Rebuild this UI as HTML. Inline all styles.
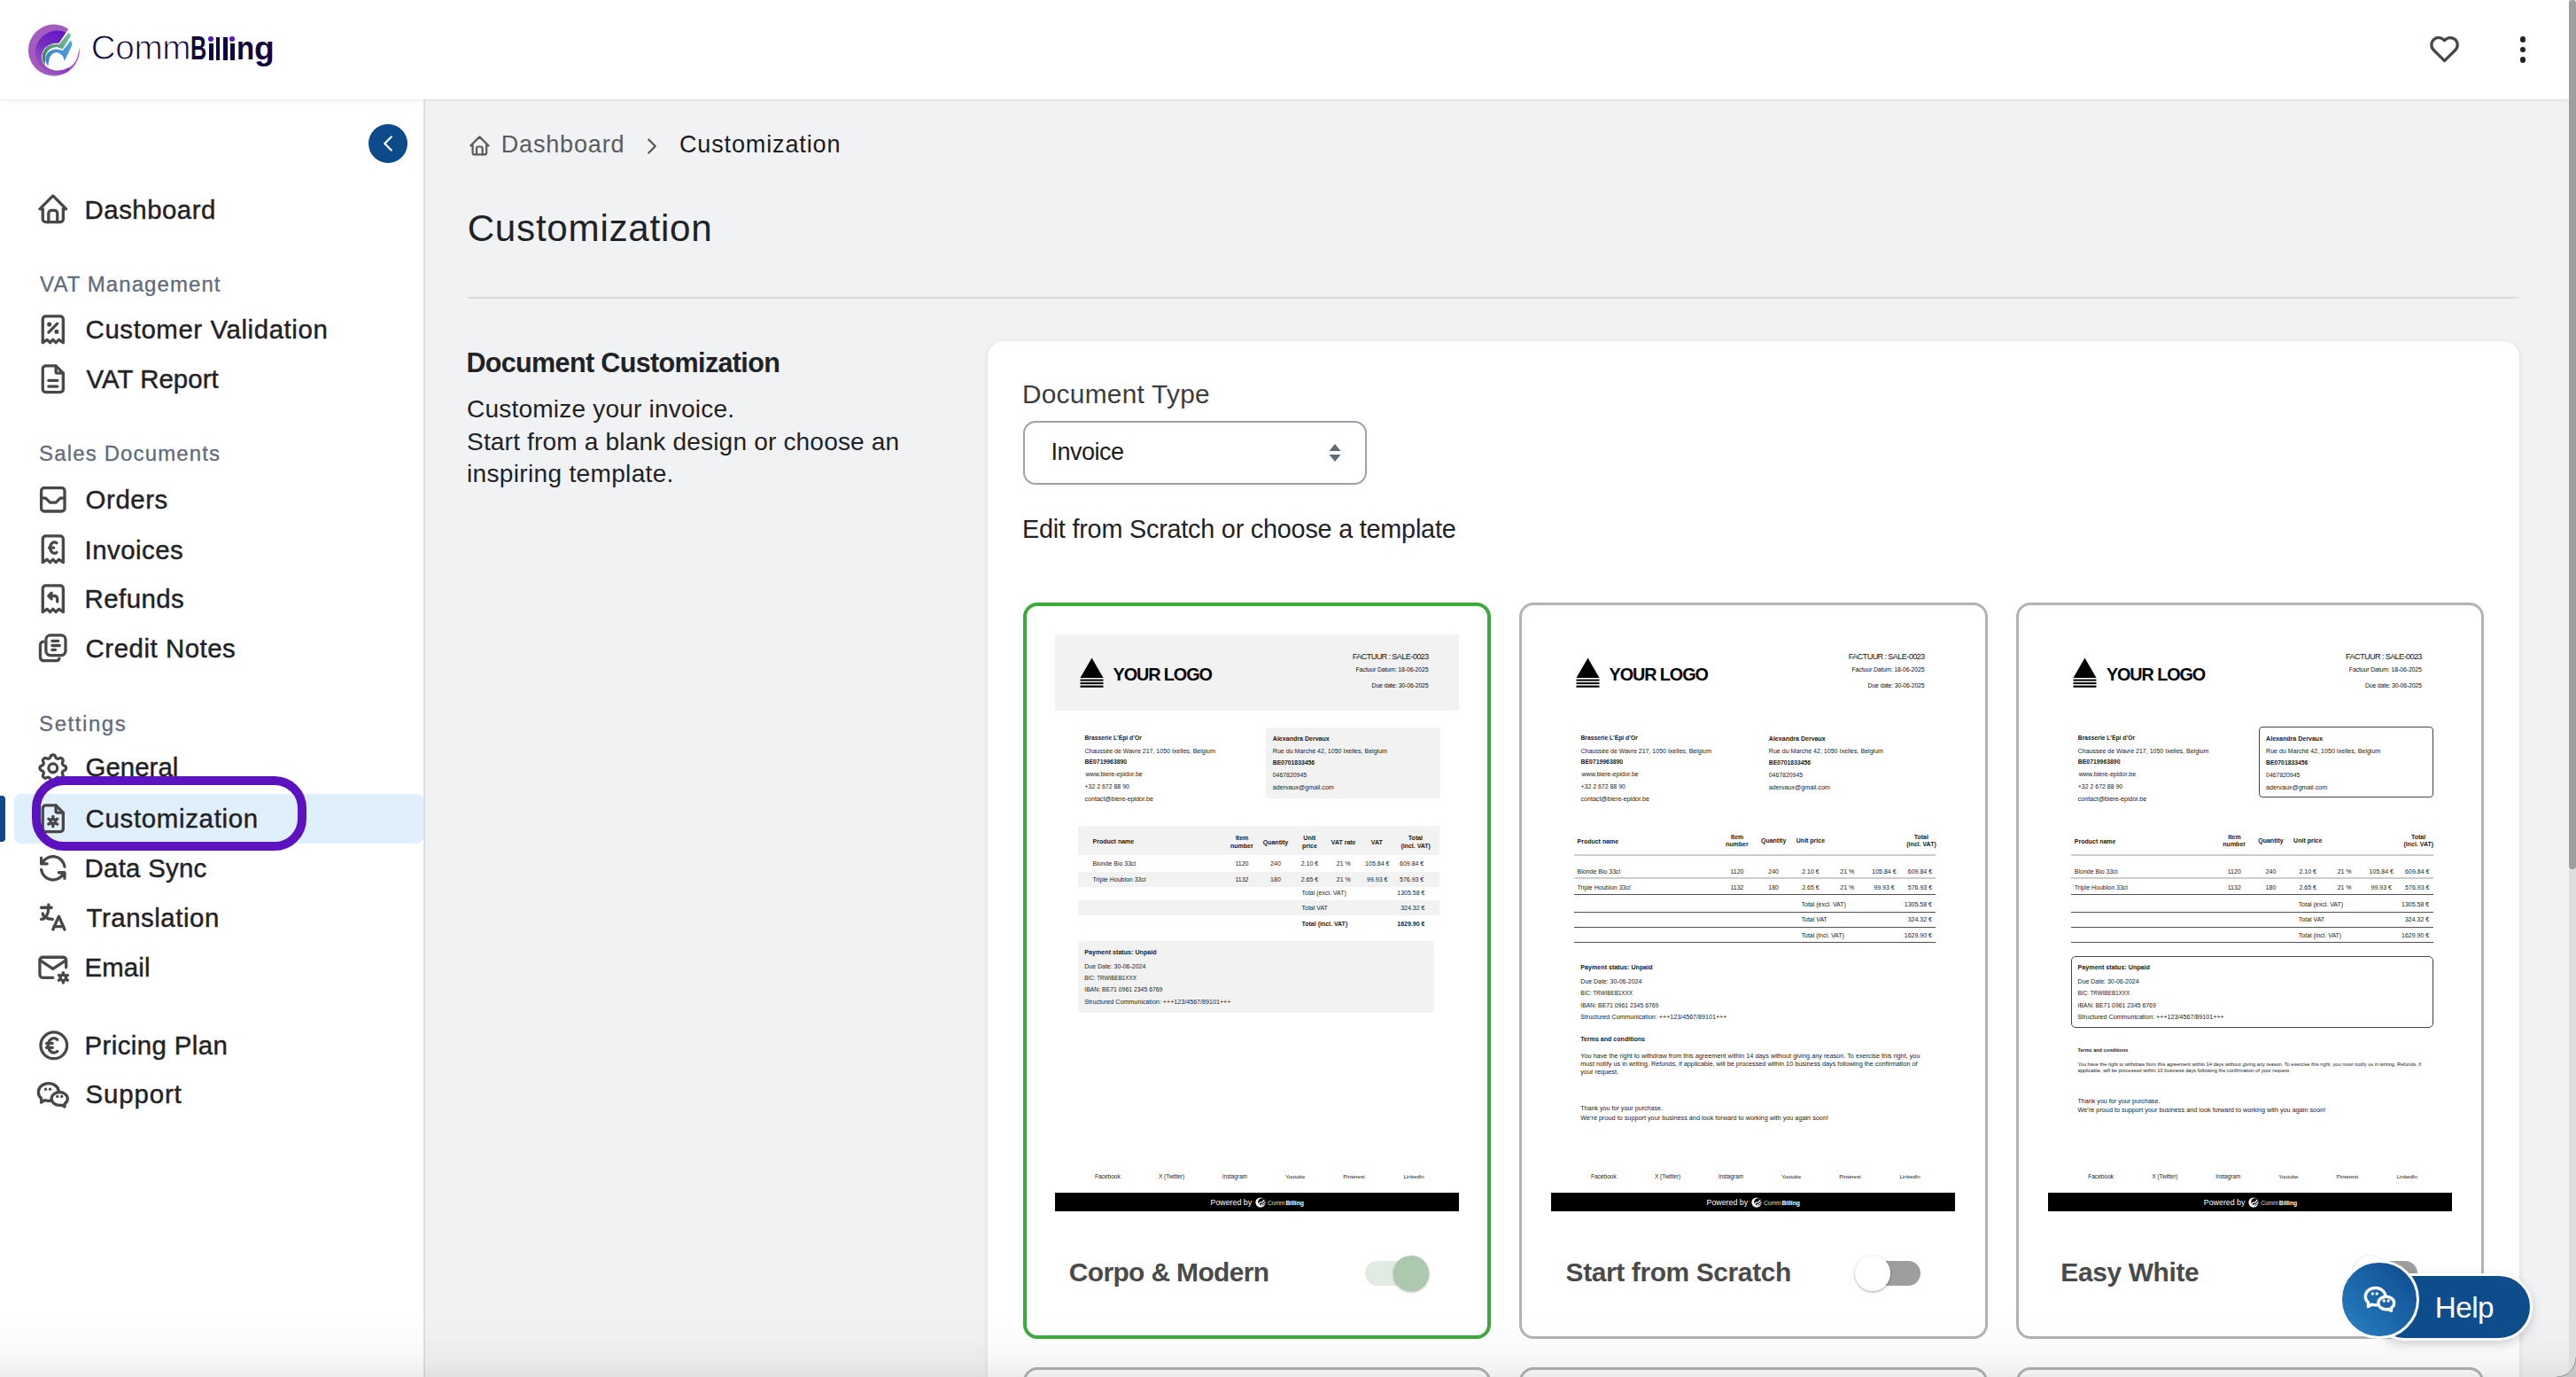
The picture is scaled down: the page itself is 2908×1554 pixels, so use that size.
<!DOCTYPE html>
<html><head><meta charset="utf-8"><title>CommBilling - Customization</title>
<style>
html,body{margin:0;padding:0;width:2908px;height:1554px;overflow:hidden;background:#f1f2f4;font-family:"Liberation Sans",sans-serif;}
.a{position:absolute}
.t{position:absolute;white-space:nowrap}
</style></head><body>
<svg class=a style="left:527.52px;top:150.82px;" width="26.76" height="26.76" viewBox="0 0 24 24" fill="none" stroke="#5c5c5c" stroke-width="2" stroke-linecap="round" stroke-linejoin="round"><path d="M5 12l-2 0l9 -9l9 9l-2 0"/><path d="M5 12v7a2 2 0 0 0 2 2h10a2 2 0 0 0 2 -2v-7"/><path d="M9 21v-6a2 2 0 0 1 2 -2h2a2 2 0 0 1 2 2v6"/></svg>
<div class=t style="left:565.70px;top:150.31px;font-size:27.03px;line-height:27.03px;color:#5c5c5c;letter-spacing:0.833px;">Dashboard</div>
<svg class=a style="left:720.90px;top:149.50px;" width="30.00" height="30.00" viewBox="0 0 24 24" fill="none" stroke="#555" stroke-width="1.75" stroke-linecap="round" stroke-linejoin="round"><path d="M9 6l6 6l-6 6"/></svg>
<div class=t style="left:767.00px;top:150.31px;font-size:27.03px;line-height:27.03px;color:#1c1c1c;letter-spacing:0.855px;">Customization</div>
<div class=t style="left:527.70px;top:237.01px;font-size:42.15px;line-height:42.15px;color:#1f2226;letter-spacing:0.753px;">Customization</div>
<div class=a style="left:528.00px;top:335.00px;width:2316.00px;height:1.60px;background:#dcdde1"></div>
<div class=t style="left:526.40px;top:393.56px;font-size:30.52px;line-height:30.52px;color:#1f2226;font-weight:700;letter-spacing:-0.640px;">Document Customization</div>
<div class=t style="left:527.00px;top:448.25px;font-size:28.05px;line-height:28.05px;color:#1f2226;letter-spacing:0.199px;">Customize your invoice.</div>
<div class=t style="left:527.00px;top:485.25px;font-size:28.05px;line-height:28.05px;color:#1f2226;letter-spacing:0.175px;">Start from a blank design or choose an</div>
<div class=t style="left:527.00px;top:521.45px;font-size:28.05px;line-height:28.05px;color:#1f2226;letter-spacing:0.321px;">inspiring template.</div>
<div class=a style="left:1115.00px;top:385.00px;width:1729.00px;height:1300.00px;background:#fff;border-radius:18px;box-shadow:0 1px 7px rgba(0,0,0,0.085)"></div>
<div class=t style="left:1153.90px;top:430.47px;font-size:29.80px;line-height:29.80px;color:#3d3d3d;letter-spacing:0.299px;">Document Type</div>
<div class=a style="left:1155.40px;top:475.30px;width:387.20px;height:71.30px;box-sizing:border-box;border:2px solid #9aa3ad;border-radius:14px;background:#fff"></div>
<div class=t style="left:1186.50px;top:497.31px;font-size:27.03px;line-height:27.03px;color:#1c1c1c;letter-spacing:-0.512px;">Invoice</div>
<svg class=a style="left:1500px;top:500px" width="14" height="22" viewBox="0 0 14 22"><path d="M7 0.9L13.5 9H0.5z" fill="#5f6b77"/><path d="M7 21.1L13.5 13H0.5z" fill="#5f6b77"/></svg>
<div class=t style="left:1153.90px;top:583.23px;font-size:28.78px;line-height:28.78px;color:#1f2226;letter-spacing:-0.201px;">Edit from Scratch or choose a template</div>
<div class=a style="left:1154.80px;top:680.00px;width:528.00px;height:830.60px;box-sizing:border-box;border:4px solid #3cab3c;border-radius:16px;background:#fff"></div>
<div class=a style="left:1154.80px;top:1543.00px;width:528.00px;height:300.00px;box-sizing:border-box;border:3.6px solid #b3b3b3;border-radius:16px;background:#fff"></div>
<div class=a style="left:1191.00px;top:716.00px;width:456.00px;height:85.60px;background:#f2f2f2"></div>
<svg class=a style="left:1218.50px;top:742px" width="27" height="34" viewBox="0 0 27 34"><path d="M13.5 0.4L26.5 23H0.5z" fill="#000"/><rect x="0.5" y="24.6" width="26" height="2" fill="#000"/><rect x="0.5" y="28.1" width="26" height="2" fill="#000"/><rect x="0.5" y="31.6" width="26" height="2.2" fill="#000"/></svg>
<div class=t style="left:1256.60px;top:752.26px;font-size:19.77px;line-height:19.77px;color:#000;font-weight:700;letter-spacing:-1.067px;">YOUR LOGO</div>
<div class=t style="left:1526.80px;top:737.26px;font-size:9.14px;line-height:9.14px;color:#111;letter-spacing:-0.612px;">FACTUUR : SALE-0023</div>
<div class=t style="left:1530.50px;top:753.14px;font-size:6.92px;line-height:6.92px;color:#111;letter-spacing:-0.114px;">Factuur Datum: 18-06-2025</div>
<div class=t style="left:1548.60px;top:770.64px;font-size:6.92px;line-height:6.92px;color:#111;letter-spacing:-0.169px;">Due date: 30-06-2025</div>
<div class=t style="left:1224.50px;top:829.89px;font-size:6.74px;line-height:6.74px;color:#1a1a1a;font-weight:700;">Brasserie L’Épi d’Or</div>
<div class=t style="left:1224.50px;top:843.51px;font-size:7.02px;line-height:7.02px;color:#1a1a1a;">Chaussée de Wavre 217, 1050 Ixelles, Belgium</div>
<div class=t style="left:1224.50px;top:857.48px;font-size:6.87px;line-height:6.87px;color:#1a1a1a;font-weight:700;">BE0719963890</div>
<div class=t style="left:1225.42px;top:871.13px;font-size:7.12px;line-height:7.12px;color:#1a1a1a;">www.biere-epidor.be</div>
<div class=t style="left:1224.50px;top:885.13px;font-size:6.94px;line-height:6.94px;color:#1a1a1a;">+32 2 672 88 90</div>
<div class=t style="left:1224.50px;top:898.84px;font-size:7.10px;line-height:7.10px;color:#1a1a1a;">contact@biere-epidor.be</div>
<div class=a style="left:1429.20px;top:820.60px;width:196.80px;height:80.20px;background:#f2f2f2;border-radius:4px"></div>
<div class=t style="left:1436.80px;top:830.41px;font-size:7.07px;line-height:7.07px;color:#1a1a1a;font-weight:700;">Alexandra Dervaux</div>
<div class=t style="left:1436.80px;top:844.32px;font-size:7.07px;line-height:7.07px;color:#1a1a1a;">Rue du Marché 42, 1050 Ixelles, Belgium</div>
<div class=t style="left:1436.80px;top:858.43px;font-size:6.81px;line-height:6.81px;color:#1a1a1a;font-weight:700;">BE0701833456</div>
<div class=t style="left:1436.80px;top:872.27px;font-size:6.89px;line-height:6.89px;color:#1a1a1a;">0467820945</div>
<div class=t style="left:1436.80px;top:885.97px;font-size:7.13px;line-height:7.13px;color:#1a1a1a;">adervaux@gmail.com</div>
<div class=a style="left:1217.00px;top:932.00px;width:408.00px;height:32.60px;background:#f2f2f2"></div>
<div class=t style="left:1233.50px;top:945.79px;font-size:7.00px;line-height:7.00px;color:#1a1a1a;font-weight:700;">Product name</div>
<div class=t style="left:1425.75px;top:946.59px;font-size:7.00px;line-height:7.00px;color:#1a1a1a;font-weight:700;">Quantity</div>
<div class=t style="left:1502.77px;top:946.59px;font-size:7.00px;line-height:7.00px;color:#1a1a1a;font-weight:700;">VAT rate</div>
<div class=t style="left:1547.76px;top:946.59px;font-size:7.00px;line-height:7.00px;color:#1a1a1a;font-weight:700;">VAT</div>
<div class=t style="left:1394.92px;top:941.99px;font-size:7.00px;line-height:7.00px;color:#1a1a1a;font-weight:700;">Item</div>
<div class=t style="left:1389.03px;top:951.39px;font-size:7.00px;line-height:7.00px;color:#1a1a1a;font-weight:700;">number</div>
<div class=t style="left:1471.36px;top:941.99px;font-size:7.00px;line-height:7.00px;color:#1a1a1a;font-weight:700;">Unit</div>
<div class=t style="left:1470.08px;top:951.39px;font-size:7.00px;line-height:7.00px;color:#1a1a1a;font-weight:700;">price</div>
<div class=t style="left:1589.87px;top:941.99px;font-size:7.00px;line-height:7.00px;color:#1a1a1a;font-weight:700;">Total</div>
<div class=t style="left:1581.38px;top:951.39px;font-size:7.00px;line-height:7.00px;color:#1a1a1a;font-weight:700;">(incl. VAT)</div>
<div class=a style="left:1217.00px;top:983.50px;width:408.00px;height:17.00px;background:#f2f2f2"></div>
<div class=a style="left:1217.00px;top:1015.60px;width:408.00px;height:17.00px;background:#f2f2f2"></div>
<div class=t style="left:1233.50px;top:970.89px;font-size:7.00px;line-height:7.00px;color:#1a1a1a;">Blonde Bio 33cl</div>
<div class=t style="left:1394.42px;top:970.89px;font-size:7.00px;line-height:7.00px;color:#1a1a1a;">1120</div>
<div class=t style="left:1434.11px;top:970.89px;font-size:7.00px;line-height:7.00px;color:#1a1a1a;">240</div>
<div class=t style="left:1468.72px;top:970.89px;font-size:7.00px;line-height:7.00px;color:#1a1a1a;">2.10 €</div>
<div class=t style="left:1508.83px;top:970.89px;font-size:7.00px;line-height:7.00px;color:#1a1a1a;">21 %</div>
<div class=t style="left:1541.12px;top:970.89px;font-size:7.00px;line-height:7.00px;color:#1a1a1a;">105.84 €</div>
<div class=t style="left:1580.02px;top:970.89px;font-size:7.00px;line-height:7.00px;color:#1a1a1a;">609.84 €</div>
<div class=t style="left:1233.50px;top:988.79px;font-size:7.00px;line-height:7.00px;color:#1a1a1a;">Triple Houblon 33cl</div>
<div class=t style="left:1394.42px;top:988.79px;font-size:7.00px;line-height:7.00px;color:#1a1a1a;">1132</div>
<div class=t style="left:1434.11px;top:988.79px;font-size:7.00px;line-height:7.00px;color:#1a1a1a;">180</div>
<div class=t style="left:1468.72px;top:988.79px;font-size:7.00px;line-height:7.00px;color:#1a1a1a;">2.65 €</div>
<div class=t style="left:1508.83px;top:988.79px;font-size:7.00px;line-height:7.00px;color:#1a1a1a;">21 %</div>
<div class=t style="left:1543.07px;top:988.79px;font-size:7.00px;line-height:7.00px;color:#1a1a1a;">99.93 €</div>
<div class=t style="left:1580.02px;top:988.79px;font-size:7.00px;line-height:7.00px;color:#1a1a1a;">576.93 €</div>
<div class=t style="left:1469.50px;top:1004.19px;font-size:7.00px;line-height:7.00px;color:#1a1a1a;">Total (excl. VAT)</div>
<div class=t style="left:1577.25px;top:1004.19px;font-size:7.00px;line-height:7.00px;color:#1a1a1a;">1305.58 €</div>
<div class=t style="left:1469.50px;top:1021.39px;font-size:7.00px;line-height:7.00px;color:#1a1a1a;">Total VAT</div>
<div class=t style="left:1581.15px;top:1021.39px;font-size:7.00px;line-height:7.00px;color:#1a1a1a;">324.32 €</div>
<div class=t style="left:1469.50px;top:1038.79px;font-size:7.00px;line-height:7.00px;color:#1a1a1a;font-weight:700;">Total (incl. VAT)</div>
<div class=t style="left:1577.25px;top:1038.79px;font-size:7.00px;line-height:7.00px;color:#1a1a1a;font-weight:700;">1629.90 €</div>
<div class=a style="left:1217.00px;top:1061.70px;width:401.70px;height:81.10px;background:#f2f2f2;border-radius:5px"></div>
<div class=t style="left:1224.30px;top:1071.57px;font-size:7.15px;line-height:7.15px;color:#1a1a1a;font-weight:700;">Payment status: Unpaid</div>
<div class=t style="left:1224.30px;top:1086.52px;font-size:6.98px;line-height:6.98px;color:#1a1a1a;">Due Date: 30-06-2024</div>
<div class=t style="left:1224.30px;top:1100.97px;font-size:6.32px;line-height:6.32px;color:#1a1a1a;">BIC: TRWIBEB1XXX</div>
<div class=t style="left:1224.30px;top:1114.22px;font-size:6.86px;line-height:6.86px;color:#1a1a1a;">IBAN: BE71 0961 2345 6769</div>
<div class=t style="left:1224.30px;top:1127.68px;font-size:7.15px;line-height:7.15px;color:#1a1a1a;">Structured Communication: +++123/4567/89101+++</div>
<div class=t style="left:1235.90px;top:1324.79px;font-size:6.58px;line-height:6.58px;color:#222;">Facebook</div>
<div class=t style="left:1308.10px;top:1324.97px;font-size:6.37px;line-height:6.37px;color:#222;">X (Twitter)</div>
<div class=t style="left:1379.90px;top:1325.03px;font-size:6.30px;line-height:6.30px;color:#222;">Instagram</div>
<div class=t style="left:1450.90px;top:1325.16px;font-size:6.14px;line-height:6.14px;color:#222;">Youtube</div>
<div class=t style="left:1516.20px;top:1325.07px;font-size:6.25px;line-height:6.25px;color:#222;">Pinterest</div>
<div class=t style="left:1584.40px;top:1325.13px;font-size:6.18px;line-height:6.18px;color:#222;">LinkedIn</div>
<div class=a style="left:1191.00px;top:1345.70px;width:456.00px;height:21.30px;background:#000"></div>
<div class=t style="left:1366.50px;top:1353.43px;font-size:8.84px;line-height:8.84px;color:#fff;">Powered by</div>
<svg class=a style="left:1417.00px;top:1350.5px" width="12" height="12" viewBox="0 0 12 12"><circle cx="6" cy="6" r="5.6" fill="#fff"/><circle cx="7.4" cy="5.4" r="4.2" fill="#000"/><path d="M4.3 9.6 C3.6 7 5.2 5.4 7.8 5.9 L10.3 3.2" stroke="#fff" stroke-width="1.3" fill="none"/><path d="M6.2 10.3 C6 8.6 7.4 7.6 9 8.2 L11 5.6" stroke="#fff" stroke-width="1.1" fill="none"/></svg>
<div class=t style="left:1431.00px;top:1354.52px;font-size:6.80px;line-height:6.80px;color:#ddd;letter-spacing:-0.102px;">Comm</div>
<div class=t style="left:1451.50px;top:1354.52px;font-size:6.80px;line-height:6.80px;color:#fff;font-weight:700;letter-spacing:-0.062px;">Billing</div>
<div class=a style="left:1714.80px;top:680.00px;width:529.00px;height:830.60px;box-sizing:border-box;border:3.6px solid #b3b3b3;border-radius:16px;background:#fff"></div>
<div class=a style="left:1714.80px;top:1543.00px;width:529.00px;height:300.00px;box-sizing:border-box;border:3.6px solid #b3b3b3;border-radius:16px;background:#fff"></div>
<svg class=a style="left:1778.50px;top:742px" width="27" height="34" viewBox="0 0 27 34"><path d="M13.5 0.4L26.5 23H0.5z" fill="#000"/><rect x="0.5" y="24.6" width="26" height="2" fill="#000"/><rect x="0.5" y="28.1" width="26" height="2" fill="#000"/><rect x="0.5" y="31.6" width="26" height="2.2" fill="#000"/></svg>
<div class=t style="left:1816.60px;top:752.26px;font-size:19.77px;line-height:19.77px;color:#000;font-weight:700;letter-spacing:-1.067px;">YOUR LOGO</div>
<div class=t style="left:2086.80px;top:737.26px;font-size:9.14px;line-height:9.14px;color:#111;letter-spacing:-0.612px;">FACTUUR : SALE-0023</div>
<div class=t style="left:2090.50px;top:753.14px;font-size:6.92px;line-height:6.92px;color:#111;letter-spacing:-0.114px;">Factuur Datum: 18-06-2025</div>
<div class=t style="left:2108.60px;top:770.64px;font-size:6.92px;line-height:6.92px;color:#111;letter-spacing:-0.169px;">Due date: 30-06-2025</div>
<div class=t style="left:1784.50px;top:829.89px;font-size:6.74px;line-height:6.74px;color:#1a1a1a;font-weight:700;">Brasserie L’Épi d’Or</div>
<div class=t style="left:1784.50px;top:843.51px;font-size:7.02px;line-height:7.02px;color:#1a1a1a;">Chaussée de Wavre 217, 1050 Ixelles, Belgium</div>
<div class=t style="left:1784.50px;top:857.48px;font-size:6.87px;line-height:6.87px;color:#1a1a1a;font-weight:700;">BE0719963890</div>
<div class=t style="left:1785.42px;top:871.13px;font-size:7.12px;line-height:7.12px;color:#1a1a1a;">www.biere-epidor.be</div>
<div class=t style="left:1784.50px;top:885.13px;font-size:6.94px;line-height:6.94px;color:#1a1a1a;">+32 2 672 88 90</div>
<div class=t style="left:1784.50px;top:898.84px;font-size:7.10px;line-height:7.10px;color:#1a1a1a;">contact@biere-epidor.be</div>
<div class=t style="left:1996.80px;top:830.41px;font-size:7.07px;line-height:7.07px;color:#1a1a1a;font-weight:700;">Alexandra Dervaux</div>
<div class=t style="left:1996.80px;top:844.32px;font-size:7.07px;line-height:7.07px;color:#1a1a1a;">Rue du Marché 42, 1050 Ixelles, Belgium</div>
<div class=t style="left:1996.80px;top:858.43px;font-size:6.81px;line-height:6.81px;color:#1a1a1a;font-weight:700;">BE0701833456</div>
<div class=t style="left:1996.80px;top:872.27px;font-size:6.89px;line-height:6.89px;color:#1a1a1a;">0467820945</div>
<div class=t style="left:1996.80px;top:885.97px;font-size:7.13px;line-height:7.13px;color:#1a1a1a;">adervaux@gmail.com</div>
<div class=t style="left:1780.50px;top:945.89px;font-size:7.00px;line-height:7.00px;color:#1a1a1a;font-weight:700;">Product name</div>
<div class=t style="left:1987.95px;top:944.59px;font-size:7.00px;line-height:7.00px;color:#1a1a1a;font-weight:700;">Quantity</div>
<div class=t style="left:2027.81px;top:944.59px;font-size:7.00px;line-height:7.00px;color:#1a1a1a;font-weight:700;">Unit price</div>
<div class=t style="left:1953.92px;top:940.89px;font-size:7.00px;line-height:7.00px;color:#1a1a1a;font-weight:700;">Item</div>
<div class=t style="left:1948.03px;top:949.29px;font-size:7.00px;line-height:7.00px;color:#1a1a1a;font-weight:700;">number</div>
<div class=t style="left:2160.67px;top:940.89px;font-size:7.00px;line-height:7.00px;color:#1a1a1a;font-weight:700;">Total</div>
<div class=t style="left:2152.18px;top:949.29px;font-size:7.00px;line-height:7.00px;color:#1a1a1a;font-weight:700;">(incl. VAT)</div>
<div class=a style="left:1776.70px;top:964.00px;width:408.60px;height:2.00px;background:#cdcdcd"></div>
<div class=a style="left:1776.70px;top:990.20px;width:408.60px;height:2.00px;background:#cdcdcd"></div>
<div class=a style="left:1776.70px;top:1009.20px;width:408.60px;height:1.10px;background:#505050"></div>
<div class=a style="left:1776.70px;top:1028.80px;width:408.60px;height:1.10px;background:#505050"></div>
<div class=a style="left:1776.70px;top:1045.90px;width:408.60px;height:1.10px;background:#505050"></div>
<div class=a style="left:1776.70px;top:1063.00px;width:408.60px;height:1.10px;background:#505050"></div>
<div class=t style="left:1780.50px;top:980.19px;font-size:7.00px;line-height:7.00px;color:#1a1a1a;">Blonde Bio 33cl</div>
<div class=t style="left:1953.42px;top:980.19px;font-size:7.00px;line-height:7.00px;color:#1a1a1a;">1120</div>
<div class=t style="left:1996.31px;top:980.19px;font-size:7.00px;line-height:7.00px;color:#1a1a1a;">240</div>
<div class=t style="left:2034.22px;top:980.19px;font-size:7.00px;line-height:7.00px;color:#1a1a1a;">2.10 €</div>
<div class=t style="left:2077.33px;top:980.19px;font-size:7.00px;line-height:7.00px;color:#1a1a1a;">21 %</div>
<div class=t style="left:2113.32px;top:980.19px;font-size:7.00px;line-height:7.00px;color:#1a1a1a;">105.84 €</div>
<div class=t style="left:2153.82px;top:980.19px;font-size:7.00px;line-height:7.00px;color:#1a1a1a;">609.84 €</div>
<div class=t style="left:1780.50px;top:997.79px;font-size:7.00px;line-height:7.00px;color:#1a1a1a;">Triple Houblon 33cl</div>
<div class=t style="left:1953.42px;top:997.79px;font-size:7.00px;line-height:7.00px;color:#1a1a1a;">1132</div>
<div class=t style="left:1996.31px;top:997.79px;font-size:7.00px;line-height:7.00px;color:#1a1a1a;">180</div>
<div class=t style="left:2034.22px;top:997.79px;font-size:7.00px;line-height:7.00px;color:#1a1a1a;">2.65 €</div>
<div class=t style="left:2077.33px;top:997.79px;font-size:7.00px;line-height:7.00px;color:#1a1a1a;">21 %</div>
<div class=t style="left:2115.27px;top:997.79px;font-size:7.00px;line-height:7.00px;color:#1a1a1a;">99.93 €</div>
<div class=t style="left:2153.82px;top:997.79px;font-size:7.00px;line-height:7.00px;color:#1a1a1a;">576.93 €</div>
<div class=t style="left:2033.50px;top:1017.19px;font-size:7.00px;line-height:7.00px;color:#1a1a1a;">Total (excl. VAT)</div>
<div class=t style="left:2149.75px;top:1017.19px;font-size:7.00px;line-height:7.00px;color:#1a1a1a;">1305.58 €</div>
<div class=t style="left:2033.50px;top:1034.39px;font-size:7.00px;line-height:7.00px;color:#1a1a1a;">Total VAT</div>
<div class=t style="left:2153.65px;top:1034.39px;font-size:7.00px;line-height:7.00px;color:#1a1a1a;">324.32 €</div>
<div class=t style="left:2033.50px;top:1051.89px;font-size:7.00px;line-height:7.00px;color:#1a1a1a;">Total (incl. VAT)</div>
<div class=t style="left:2149.75px;top:1051.89px;font-size:7.00px;line-height:7.00px;color:#1a1a1a;">1629.90 €</div>
<div class=t style="left:1784.30px;top:1088.97px;font-size:7.15px;line-height:7.15px;color:#1a1a1a;font-weight:700;">Payment status: Unpaid</div>
<div class=t style="left:1784.30px;top:1104.12px;font-size:6.98px;line-height:6.98px;color:#1a1a1a;">Due Date: 30-06-2024</div>
<div class=t style="left:1784.30px;top:1118.47px;font-size:6.32px;line-height:6.32px;color:#1a1a1a;">BIC: TRWIBEB1XXX</div>
<div class=t style="left:1784.30px;top:1131.72px;font-size:6.86px;line-height:6.86px;color:#1a1a1a;">IBAN: BE71 0961 2345 6769</div>
<div class=t style="left:1784.30px;top:1145.08px;font-size:7.15px;line-height:7.15px;color:#1a1a1a;">Structured Communication: +++123/4567/89101+++</div>
<div class=t style="left:1784.20px;top:1169.34px;font-size:7.07px;line-height:7.07px;color:#1a1a1a;font-weight:700;">Terms and conditions</div>
<div class=t style="left:1784.20px;top:1187.74px;font-size:7.30px;line-height:7.30px;color:#1a1a1a;">You have the right to withdraw from this agreement within 14 days without giving any reason. To exercise this right, you</div>
<div class=t style="left:1784.20px;top:1197.05px;font-size:7.29px;line-height:7.29px;color:#1a1a1a;">must notify us in writing. Refunds, if applicable, will be processed within 10 business days following the confirmation of</div>
<div class=t style="left:1784.20px;top:1206.29px;font-size:7.36px;line-height:7.36px;color:#1a1a1a;">your request.</div>
<div class=t style="left:1784.20px;top:1248.47px;font-size:7.15px;line-height:7.15px;color:#1a1a1a;">Thank you for your purchase.</div>
<div class=t style="left:1784.20px;top:1257.86px;font-size:7.27px;line-height:7.27px;color:#1a1a1a;">We’re proud to support your business and look forward to working with you again soon!</div>
<div class=t style="left:1795.90px;top:1324.79px;font-size:6.58px;line-height:6.58px;color:#222;">Facebook</div>
<div class=t style="left:1868.10px;top:1324.97px;font-size:6.37px;line-height:6.37px;color:#222;">X (Twitter)</div>
<div class=t style="left:1939.90px;top:1325.03px;font-size:6.30px;line-height:6.30px;color:#222;">Instagram</div>
<div class=t style="left:2010.90px;top:1325.16px;font-size:6.14px;line-height:6.14px;color:#222;">Youtube</div>
<div class=t style="left:2076.20px;top:1325.07px;font-size:6.25px;line-height:6.25px;color:#222;">Pinterest</div>
<div class=t style="left:2144.40px;top:1325.13px;font-size:6.18px;line-height:6.18px;color:#222;">LinkedIn</div>
<div class=a style="left:1751.00px;top:1345.70px;width:456.00px;height:21.30px;background:#000"></div>
<div class=t style="left:1926.50px;top:1353.43px;font-size:8.84px;line-height:8.84px;color:#fff;">Powered by</div>
<svg class=a style="left:1977.00px;top:1350.5px" width="12" height="12" viewBox="0 0 12 12"><circle cx="6" cy="6" r="5.6" fill="#fff"/><circle cx="7.4" cy="5.4" r="4.2" fill="#000"/><path d="M4.3 9.6 C3.6 7 5.2 5.4 7.8 5.9 L10.3 3.2" stroke="#fff" stroke-width="1.3" fill="none"/><path d="M6.2 10.3 C6 8.6 7.4 7.6 9 8.2 L11 5.6" stroke="#fff" stroke-width="1.1" fill="none"/></svg>
<div class=t style="left:1991.00px;top:1354.52px;font-size:6.80px;line-height:6.80px;color:#ddd;letter-spacing:-0.102px;">Comm</div>
<div class=t style="left:2011.50px;top:1354.52px;font-size:6.80px;line-height:6.80px;color:#fff;font-weight:700;letter-spacing:-0.062px;">Billing</div>
<div class=a style="left:2276.10px;top:680.00px;width:528.00px;height:830.60px;box-sizing:border-box;border:3.6px solid #b3b3b3;border-radius:16px;background:#fff"></div>
<div class=a style="left:2276.10px;top:1543.00px;width:528.00px;height:300.00px;box-sizing:border-box;border:3.6px solid #b3b3b3;border-radius:16px;background:#fff"></div>
<svg class=a style="left:2339.80px;top:742px" width="27" height="34" viewBox="0 0 27 34"><path d="M13.5 0.4L26.5 23H0.5z" fill="#000"/><rect x="0.5" y="24.6" width="26" height="2" fill="#000"/><rect x="0.5" y="28.1" width="26" height="2" fill="#000"/><rect x="0.5" y="31.6" width="26" height="2.2" fill="#000"/></svg>
<div class=t style="left:2377.90px;top:752.26px;font-size:19.77px;line-height:19.77px;color:#000;font-weight:700;letter-spacing:-1.067px;">YOUR LOGO</div>
<div class=t style="left:2648.10px;top:737.26px;font-size:9.14px;line-height:9.14px;color:#111;letter-spacing:-0.612px;">FACTUUR : SALE-0023</div>
<div class=t style="left:2651.80px;top:753.14px;font-size:6.92px;line-height:6.92px;color:#111;letter-spacing:-0.114px;">Factuur Datum: 18-06-2025</div>
<div class=t style="left:2669.90px;top:770.64px;font-size:6.92px;line-height:6.92px;color:#111;letter-spacing:-0.169px;">Due date: 30-06-2025</div>
<div class=t style="left:2345.80px;top:829.89px;font-size:6.74px;line-height:6.74px;color:#1a1a1a;font-weight:700;">Brasserie L’Épi d’Or</div>
<div class=t style="left:2345.80px;top:843.51px;font-size:7.02px;line-height:7.02px;color:#1a1a1a;">Chaussée de Wavre 217, 1050 Ixelles, Belgium</div>
<div class=t style="left:2345.80px;top:857.48px;font-size:6.87px;line-height:6.87px;color:#1a1a1a;font-weight:700;">BE0719963890</div>
<div class=t style="left:2346.72px;top:871.13px;font-size:7.12px;line-height:7.12px;color:#1a1a1a;">www.biere-epidor.be</div>
<div class=t style="left:2345.80px;top:885.13px;font-size:6.94px;line-height:6.94px;color:#1a1a1a;">+32 2 672 88 90</div>
<div class=t style="left:2345.80px;top:898.84px;font-size:7.10px;line-height:7.10px;color:#1a1a1a;">contact@biere-epidor.be</div>
<div class=a style="left:2549.80px;top:820.30px;width:197.30px;height:80.10px;box-sizing:border-box;border:1px solid #444;border-radius:4px"></div>
<div class=t style="left:2558.10px;top:830.41px;font-size:7.07px;line-height:7.07px;color:#1a1a1a;font-weight:700;">Alexandra Dervaux</div>
<div class=t style="left:2558.10px;top:844.32px;font-size:7.07px;line-height:7.07px;color:#1a1a1a;">Rue du Marché 42, 1050 Ixelles, Belgium</div>
<div class=t style="left:2558.10px;top:858.43px;font-size:6.81px;line-height:6.81px;color:#1a1a1a;font-weight:700;">BE0701833456</div>
<div class=t style="left:2558.10px;top:872.27px;font-size:6.89px;line-height:6.89px;color:#1a1a1a;">0467820945</div>
<div class=t style="left:2558.10px;top:885.97px;font-size:7.13px;line-height:7.13px;color:#1a1a1a;">adervaux@gmail.com</div>
<div class=t style="left:2341.80px;top:945.89px;font-size:7.00px;line-height:7.00px;color:#1a1a1a;font-weight:700;">Product name</div>
<div class=t style="left:2549.25px;top:944.59px;font-size:7.00px;line-height:7.00px;color:#1a1a1a;font-weight:700;">Quantity</div>
<div class=t style="left:2589.11px;top:944.59px;font-size:7.00px;line-height:7.00px;color:#1a1a1a;font-weight:700;">Unit price</div>
<div class=t style="left:2515.22px;top:940.89px;font-size:7.00px;line-height:7.00px;color:#1a1a1a;font-weight:700;">Item</div>
<div class=t style="left:2509.33px;top:949.29px;font-size:7.00px;line-height:7.00px;color:#1a1a1a;font-weight:700;">number</div>
<div class=t style="left:2721.97px;top:940.89px;font-size:7.00px;line-height:7.00px;color:#1a1a1a;font-weight:700;">Total</div>
<div class=t style="left:2713.48px;top:949.29px;font-size:7.00px;line-height:7.00px;color:#1a1a1a;font-weight:700;">(incl. VAT)</div>
<div class=a style="left:2338.00px;top:964.00px;width:408.60px;height:2.00px;background:#cdcdcd"></div>
<div class=a style="left:2338.00px;top:990.20px;width:408.60px;height:2.00px;background:#cdcdcd"></div>
<div class=a style="left:2338.00px;top:1009.20px;width:408.60px;height:1.10px;background:#505050"></div>
<div class=a style="left:2338.00px;top:1028.80px;width:408.60px;height:1.10px;background:#505050"></div>
<div class=a style="left:2338.00px;top:1045.90px;width:408.60px;height:1.10px;background:#505050"></div>
<div class=a style="left:2338.00px;top:1063.00px;width:408.60px;height:1.10px;background:#505050"></div>
<div class=t style="left:2341.80px;top:980.19px;font-size:7.00px;line-height:7.00px;color:#1a1a1a;">Blonde Bio 33cl</div>
<div class=t style="left:2514.72px;top:980.19px;font-size:7.00px;line-height:7.00px;color:#1a1a1a;">1120</div>
<div class=t style="left:2557.61px;top:980.19px;font-size:7.00px;line-height:7.00px;color:#1a1a1a;">240</div>
<div class=t style="left:2595.52px;top:980.19px;font-size:7.00px;line-height:7.00px;color:#1a1a1a;">2.10 €</div>
<div class=t style="left:2638.63px;top:980.19px;font-size:7.00px;line-height:7.00px;color:#1a1a1a;">21 %</div>
<div class=t style="left:2674.62px;top:980.19px;font-size:7.00px;line-height:7.00px;color:#1a1a1a;">105.84 €</div>
<div class=t style="left:2715.12px;top:980.19px;font-size:7.00px;line-height:7.00px;color:#1a1a1a;">609.84 €</div>
<div class=t style="left:2341.80px;top:997.79px;font-size:7.00px;line-height:7.00px;color:#1a1a1a;">Triple Houblon 33cl</div>
<div class=t style="left:2514.72px;top:997.79px;font-size:7.00px;line-height:7.00px;color:#1a1a1a;">1132</div>
<div class=t style="left:2557.61px;top:997.79px;font-size:7.00px;line-height:7.00px;color:#1a1a1a;">180</div>
<div class=t style="left:2595.52px;top:997.79px;font-size:7.00px;line-height:7.00px;color:#1a1a1a;">2.65 €</div>
<div class=t style="left:2638.63px;top:997.79px;font-size:7.00px;line-height:7.00px;color:#1a1a1a;">21 %</div>
<div class=t style="left:2676.57px;top:997.79px;font-size:7.00px;line-height:7.00px;color:#1a1a1a;">99.93 €</div>
<div class=t style="left:2715.12px;top:997.79px;font-size:7.00px;line-height:7.00px;color:#1a1a1a;">576.93 €</div>
<div class=t style="left:2594.80px;top:1017.19px;font-size:7.00px;line-height:7.00px;color:#1a1a1a;">Total (excl. VAT)</div>
<div class=t style="left:2711.05px;top:1017.19px;font-size:7.00px;line-height:7.00px;color:#1a1a1a;">1305.58 €</div>
<div class=t style="left:2594.80px;top:1034.39px;font-size:7.00px;line-height:7.00px;color:#1a1a1a;">Total VAT</div>
<div class=t style="left:2714.95px;top:1034.39px;font-size:7.00px;line-height:7.00px;color:#1a1a1a;">324.32 €</div>
<div class=t style="left:2594.80px;top:1051.89px;font-size:7.00px;line-height:7.00px;color:#1a1a1a;">Total (incl. VAT)</div>
<div class=t style="left:2711.05px;top:1051.89px;font-size:7.00px;line-height:7.00px;color:#1a1a1a;">1629.90 €</div>
<div class=a style="left:2338.30px;top:1079.20px;width:408.50px;height:81.00px;box-sizing:border-box;border:1px solid #444;border-radius:5px"></div>
<div class=t style="left:2345.60px;top:1088.97px;font-size:7.15px;line-height:7.15px;color:#1a1a1a;font-weight:700;">Payment status: Unpaid</div>
<div class=t style="left:2345.60px;top:1104.12px;font-size:6.98px;line-height:6.98px;color:#1a1a1a;">Due Date: 30-06-2024</div>
<div class=t style="left:2345.60px;top:1118.47px;font-size:6.32px;line-height:6.32px;color:#1a1a1a;">BIC: TRWIBEB1XXX</div>
<div class=t style="left:2345.60px;top:1131.72px;font-size:6.86px;line-height:6.86px;color:#1a1a1a;">IBAN: BE71 0961 2345 6769</div>
<div class=t style="left:2345.60px;top:1145.08px;font-size:7.15px;line-height:7.15px;color:#1a1a1a;">Structured Communication: +++123/4567/89101+++</div>
<div class=t style="left:2345.50px;top:1183.49px;font-size:5.53px;line-height:5.53px;color:#1a1a1a;font-weight:700;">Terms and conditions</div>
<div class=t style="left:2345.50px;top:1198.60px;font-size:5.67px;line-height:5.67px;color:#1a1a1a;">You have the right to withdraw from this agreement within 14 days without giving any reason. To exercise this right, you must notify us in writing. Refunds, if</div>
<div class=t style="left:2345.50px;top:1205.79px;font-size:5.68px;line-height:5.68px;color:#1a1a1a;">applicable, will be processed within 10 business days following the confirmation of your request.</div>
<div class=t style="left:2345.50px;top:1239.87px;font-size:7.15px;line-height:7.15px;color:#1a1a1a;">Thank you for your purchase.</div>
<div class=t style="left:2345.50px;top:1248.96px;font-size:7.27px;line-height:7.27px;color:#1a1a1a;">We’re proud to support your business and look forward to working with you again soon!</div>
<div class=t style="left:2357.20px;top:1324.79px;font-size:6.58px;line-height:6.58px;color:#222;">Facebook</div>
<div class=t style="left:2429.40px;top:1324.97px;font-size:6.37px;line-height:6.37px;color:#222;">X (Twitter)</div>
<div class=t style="left:2501.20px;top:1325.03px;font-size:6.30px;line-height:6.30px;color:#222;">Instagram</div>
<div class=t style="left:2572.20px;top:1325.16px;font-size:6.14px;line-height:6.14px;color:#222;">Youtube</div>
<div class=t style="left:2637.50px;top:1325.07px;font-size:6.25px;line-height:6.25px;color:#222;">Pinterest</div>
<div class=t style="left:2705.70px;top:1325.13px;font-size:6.18px;line-height:6.18px;color:#222;">LinkedIn</div>
<div class=a style="left:2312.30px;top:1345.70px;width:456.00px;height:21.30px;background:#000"></div>
<div class=t style="left:2487.80px;top:1353.43px;font-size:8.84px;line-height:8.84px;color:#fff;">Powered by</div>
<svg class=a style="left:2538.30px;top:1350.5px" width="12" height="12" viewBox="0 0 12 12"><circle cx="6" cy="6" r="5.6" fill="#fff"/><circle cx="7.4" cy="5.4" r="4.2" fill="#000"/><path d="M4.3 9.6 C3.6 7 5.2 5.4 7.8 5.9 L10.3 3.2" stroke="#fff" stroke-width="1.3" fill="none"/><path d="M6.2 10.3 C6 8.6 7.4 7.6 9 8.2 L11 5.6" stroke="#fff" stroke-width="1.1" fill="none"/></svg>
<div class=t style="left:2552.30px;top:1354.52px;font-size:6.80px;line-height:6.80px;color:#ddd;letter-spacing:-0.102px;">Comm</div>
<div class=t style="left:2572.80px;top:1354.52px;font-size:6.80px;line-height:6.80px;color:#fff;font-weight:700;letter-spacing:-0.062px;">Billing</div>
<div class=t style="left:1206.80px;top:1420.95px;font-size:29.94px;line-height:29.94px;color:#4a4a4a;font-weight:700;letter-spacing:-0.638px;">Corpo &amp; Modern</div>
<div class=t style="left:1767.60px;top:1421.25px;font-size:29.94px;line-height:29.94px;color:#4a4a4a;font-weight:700;letter-spacing:-0.383px;">Start from Scratch</div>
<div class=t style="left:2326.30px;top:1420.75px;font-size:29.94px;line-height:29.94px;color:#4a4a4a;font-weight:700;letter-spacing:-0.374px;">Easy White</div>
<div class=a style="left:1541.00px;top:1423.00px;width:66.00px;height:28.00px;background:#e2ebe2;border-radius:14px"></div>
<div class=a style="left:1572.80px;top:1417.00px;width:40.00px;height:40.00px;background:#adc9ad;border-radius:50%;box-shadow:0 1px 3px rgba(0,0,0,0.35)"></div>
<div class=a style="left:2106.50px;top:1423.30px;width:61.20px;height:27.40px;background:#9e9e9e;border-radius:14px"></div>
<div class=a style="left:2094.20px;top:1417.00px;width:39.60px;height:39.60px;background:#fff;border-radius:50%;box-shadow:0 1px 3px rgba(0,0,0,0.35)"></div>
<div class=a style="left:2667.80px;top:1423.30px;width:61.20px;height:27.40px;background:#9e9e9e;border-radius:14px"></div>
<div class=a style="left:2655.50px;top:1417.00px;width:39.60px;height:39.60px;background:#fff;border-radius:50%;box-shadow:0 1px 3px rgba(0,0,0,0.35)"></div>
<div class=a style="left:2676.00px;top:1436.60px;width:183.20px;height:76.80px;box-sizing:border-box;border:3.5px solid #fff;background:#0e4d8c;border-radius:39px;box-shadow:0 4px 12px rgba(0,0,0,0.18)"></div>
<div class=a style="left:2641.20px;top:1422.10px;width:89.40px;height:89.40px;box-sizing:border-box;border:3.7px solid #fff;border-radius:50%;background:linear-gradient(to top right,#2a82c2 0%,#1b68ab 45%,#0e4a8c 100%)"></div>
<svg class=a style="left:2666.56px;top:1447.36px;" width="38.88" height="38.88" viewBox="0 0 24 24" fill="none" stroke="#fff" stroke-width="2.1" stroke-linecap="round" stroke-linejoin="round"><path d="M16.5 10c3.038 0 5.5 2.015 5.5 4.5c0 1.397 -.778 2.645 -2 3.47l0 2.03l-1.964 -1.178a6.649 6.649 0 0 1 -1.536 .178c-3.038 0 -5.5 -2.015 -5.5 -4.5s2.462 -4.5 5.5 -4.5z"/><path d="M11.197 15.698c-.69 .196 -1.43 .302 -2.197 .302a8.008 8.008 0 0 1 -2.612 -.432l-2.388 1.432v-2.801c-1.237 -1.082 -2 -2.564 -2 -4.199c0 -3.314 3.134 -6 7 -6c3.782 0 6.863 2.57 7 5.785l0 .233"/><path d="M10 8h.01"/><path d="M7 8h.01"/><path d="M15 13h.01"/><path d="M18 13h.01"/></svg>
<div class=t style="left:2748.70px;top:1458.72px;font-size:33.28px;line-height:33.28px;color:#fff;letter-spacing:-0.538px;">Help</div>
<div class=a style="left:0.00px;top:112.00px;width:478.00px;height:1442.00px;background:#fff"></div>
<div class=a style="left:478.00px;top:112.00px;width:2.00px;height:1442.00px;background:#dcdde3"></div>
<div class=a style="left:416.00px;top:140.00px;width:44.00px;height:44.00px;background:#0d4a8a;border-radius:50%"></div>
<svg class=a style="left:423.00px;top:147.00px;" width="30.00" height="30.00" viewBox="0 0 24 24" fill="none" stroke="#fff" stroke-width="1.9" stroke-linecap="round" stroke-linejoin="round"><path d="M15 6l-6 6l6 6"/></svg>
<div class=a style="left:16.00px;top:896.00px;width:462.00px;height:56.00px;background:#dff0fc;border-radius:8px"></div>
<div class=a style="left:0.00px;top:898.00px;width:6.00px;height:52.00px;background:#0d4a8a;border-radius:0 4px 4px 0"></div>
<svg class=a style="left:40.20px;top:216.20px;" width="39.60" height="39.60" viewBox="0 0 24 24" fill="none" stroke="#484848" stroke-width="2" stroke-linecap="round" stroke-linejoin="round"><path d="M5 12l-2 0l9 -9l9 9l-2 0"/><path d="M5 12v7a2 2 0 0 0 2 2h10a2 2 0 0 0 2 -2v-7"/><path d="M9 21v-6a2 2 0 0 1 2 -2h2a2 2 0 0 1 2 2v6"/></svg>
<div class=t style="left:95.60px;top:221.64px;font-size:29.36px;line-height:29.36px;color:#1f2226;letter-spacing:0.512px;-webkit-text-stroke:0.45px #1f2226;">Dashboard</div>
<svg class=a style="left:40.20px;top:352.00px;" width="39.60" height="39.60" viewBox="0 0 24 24" fill="none" stroke="#484848" stroke-width="2" stroke-linecap="round" stroke-linejoin="round"><path d="M9 14l6 -6"/><circle cx="9.5" cy="8.5" r="0.55" fill="currentColor"/><circle cx="14.5" cy="13.5" r="0.55" fill="currentColor"/><path d="M5 21v-16a2 2 0 0 1 2 -2h10a2 2 0 0 1 2 2v16l-3 -2l-2 2l-2 -2l-2 2l-2 -2l-3 2"/></svg>
<div class=t style="left:96.60px;top:357.34px;font-size:29.36px;line-height:29.36px;color:#1f2226;letter-spacing:0.608px;-webkit-text-stroke:0.45px #1f2226;">Customer Validation</div>
<svg class=a style="left:40.20px;top:407.90px;" width="39.60" height="39.60" viewBox="0 0 24 24" fill="none" stroke="#484848" stroke-width="2" stroke-linecap="round" stroke-linejoin="round"><path d="M14 3v4a1 1 0 0 0 1 1h4"/><path d="M17 21h-10a2 2 0 0 1 -2 -2v-14a2 2 0 0 1 2 -2h7l5 5v11a2 2 0 0 1 -2 2z"/><path d="M9 13l6 0"/><path d="M9 17l6 0"/></svg>
<div class=t style="left:97.60px;top:413.34px;font-size:29.36px;line-height:29.36px;color:#1f2226;letter-spacing:0.060px;-webkit-text-stroke:0.45px #1f2226;">VAT Report</div>
<svg class=a style="left:40.20px;top:544.00px;" width="39.60" height="39.60" viewBox="0 0 24 24" fill="none" stroke="#484848" stroke-width="2" stroke-linecap="round" stroke-linejoin="round"><path d="M4 6a2 2 0 0 1 2 -2h12a2 2 0 0 1 2 2v12a2 2 0 0 1 -2 2h-12a2 2 0 0 1 -2 -2z"/><path d="M4 11h3l3 3h4l3 -3h3"/></svg>
<div class=t style="left:96.60px;top:549.24px;font-size:29.36px;line-height:29.36px;color:#1f2226;letter-spacing:0.591px;-webkit-text-stroke:0.45px #1f2226;">Orders</div>
<svg class=a style="left:40.20px;top:600.10px;" width="39.60" height="39.60" viewBox="0 0 24 24" fill="none" stroke="#484848" stroke-width="2" stroke-linecap="round" stroke-linejoin="round"><path d="M5 21v-16a2 2 0 0 1 2 -2h10a2 2 0 0 1 2 2v16l-3 -2l-2 2l-2 -2l-2 2l-2 -2l-3 2"/><path d="M14.5 7.7A2.9 3.8 0 1 0 14.5 14.2"/><path d="M9.45 11H12.5"/></svg>
<div class=t style="left:95.60px;top:605.54px;font-size:29.36px;line-height:29.36px;color:#1f2226;letter-spacing:0.482px;-webkit-text-stroke:0.45px #1f2226;">Invoices</div>
<svg class=a style="left:40.20px;top:655.90px;" width="39.60" height="39.60" viewBox="0 0 24 24" fill="none" stroke="#484848" stroke-width="2" stroke-linecap="round" stroke-linejoin="round"><path d="M5 21v-16a2 2 0 0 1 2 -2h10a2 2 0 0 1 2 2v16l-3 -2l-2 2l-2 -2l-2 2l-2 -2l-3 2"/><path d="M15 14v-2a2 2 0 0 0 -2 -2h-4l2 -2m0 4l-2 -2"/></svg>
<div class=t style="left:95.60px;top:661.14px;font-size:29.36px;line-height:29.36px;color:#1f2226;letter-spacing:0.471px;-webkit-text-stroke:0.45px #1f2226;">Refunds</div>
<svg class=a style="left:40.20px;top:712.20px;" width="39.60" height="39.60" viewBox="0 0 24 24" fill="none" stroke="#484848" stroke-width="2" stroke-linecap="round" stroke-linejoin="round"><path d="M7.2 6a3 3 0 0 1 3 -3h7.4a3 3 0 0 1 3 3v7.7a3 3 0 0 1 -3 3h-7.4a3 3 0 0 1 -3 -3z"/><path d="M5.4 7.3a2.3 2.3 0 0 0 -2.1 2.3v8.5a2.3 2.3 0 0 0 2.3 2.3h8.6a2.3 2.3 0 0 0 2.2 -1.5"/><path d="M11.5 6.85h4.1"/><path d="M11.5 10h5"/><path d="M11.5 12.9h2.1"/></svg>
<div class=t style="left:96.60px;top:717.04px;font-size:29.36px;line-height:29.36px;color:#1f2226;letter-spacing:0.546px;-webkit-text-stroke:0.45px #1f2226;">Credit Notes</div>
<svg class=a style="left:40.20px;top:847.20px;" width="39.60" height="39.60" viewBox="0 0 24 24" fill="none" stroke="#484848" stroke-width="2" stroke-linecap="round" stroke-linejoin="round"><path d="M10.325 4.317c.426 -1.756 2.924 -1.756 3.35 0a1.724 1.724 0 0 0 2.573 1.066c1.543 -.94 3.31 .826 2.37 2.37a1.724 1.724 0 0 0 1.065 2.572c1.756 .426 1.756 2.924 0 3.35a1.724 1.724 0 0 0 -1.066 2.573c.94 1.543 -.826 3.31 -2.37 2.37a1.724 1.724 0 0 0 -2.572 1.065c-.426 1.756 -2.924 1.756 -3.35 0a1.724 1.724 0 0 0 -2.573 -1.066c-1.543 .94 -3.31 -.826 -2.37 -2.37a1.724 1.724 0 0 0 -1.065 -2.572c-1.756 -.426 -1.756 -2.924 0 -3.35a1.724 1.724 0 0 0 1.066 -2.573c-.94 -1.543 .826 -3.31 2.37 -2.37c1 .608 2.296 .07 2.572 -1.065z"/><path d="M9 12a3 3 0 1 0 6 0a3 3 0 0 0 -6 0"/></svg>
<div class=t style="left:96.60px;top:851.34px;font-size:29.36px;line-height:29.36px;color:#1f2226;letter-spacing:0.046px;-webkit-text-stroke:0.45px #1f2226;">General</div>
<svg class=a style="left:40.20px;top:904.10px;" width="39.60" height="39.60" viewBox="0 0 24 24" fill="none" stroke="#484848" stroke-width="2" stroke-linecap="round" stroke-linejoin="round"><path d="M14 3v4a1 1 0 0 0 1 1h4"/><path d="M17 21h-10a2 2 0 0 1 -2 -2v-14a2 2 0 0 1 2 -2h7l5 5v11a2 2 0 0 1 -2 2z"/><path d="M12 14m-1.6 0a1.6 1.6 0 1 0 3.2 0a1.6 1.6 0 1 0 -3.2 0"/><path d="M12 10.5v1.5"/><path d="M12 16v1.5"/><path d="M15.031 12.25l-1.299 .75"/><path d="M10.268 15l-1.3 .75"/><path d="M15 15.803l-1.285 -.773"/><path d="M10.285 12.97l-1.285 -.773"/></svg>
<div class=t style="left:96.60px;top:909.04px;font-size:29.36px;line-height:29.36px;color:#1f2226;letter-spacing:0.709px;-webkit-text-stroke:0.45px #1f2226;">Customization</div>
<svg class=a style="left:40.40px;top:959.80px;" width="39.60" height="39.60" viewBox="0 0 24 24" fill="none" stroke="#484848" stroke-width="2" stroke-linecap="round" stroke-linejoin="round"><path d="M20 11a8.1 8.1 0 0 0 -15.5 -2m-.5 -4v4h4"/><path d="M4 13a8.1 8.1 0 0 0 15.5 2m.5 4v-4h-4"/></svg>
<div class=t style="left:95.60px;top:965.04px;font-size:29.36px;line-height:29.36px;color:#1f2226;letter-spacing:0.280px;-webkit-text-stroke:0.45px #1f2226;">Data Sync</div>
<svg class=a style="left:40.40px;top:1016.20px;" width="39.60" height="39.60" viewBox="0 0 24 24" fill="none" stroke="#484848" stroke-width="2" stroke-linecap="round" stroke-linejoin="round"><path d="M4 5h7"/><path d="M9 3v2c0 4.418 -2.239 8 -5 8"/><path d="M5 9c0 2.144 2.952 3.908 6.7 4"/><path d="M12 20l4 -9l4 9"/><path d="M19.1 18h-6.2"/></svg>
<div class=t style="left:97.60px;top:1021.34px;font-size:29.36px;line-height:29.36px;color:#1f2226;letter-spacing:0.548px;-webkit-text-stroke:0.45px #1f2226;">Translation</div>
<svg class=a style="left:40.00px;top:1071.70px;" width="39.60" height="39.60" viewBox="0 0 24 24" fill="none" stroke="#484848" stroke-width="2" stroke-linecap="round" stroke-linejoin="round"><path d="M12 19h-7a2 2 0 0 1 -2 -2v-10a2 2 0 0 1 2 -2h14a2 2 0 0 1 2 2v5"/><path d="M3 7l9 6l9 -6"/><path d="M19.001 19m-2 0a2 2 0 1 0 4 0a2 2 0 1 0 -4 0"/><path d="M19.001 15.5v1.5"/><path d="M19.001 21v1.5"/><path d="M22.032 17.25l-1.299 .75"/><path d="M17.27 20l-1.3 .75"/><path d="M15.97 17.25l1.3 .75"/><path d="M20.733 20l1.3 .75"/></svg>
<div class=t style="left:95.60px;top:1077.14px;font-size:29.36px;line-height:29.36px;color:#1f2226;letter-spacing:0.102px;-webkit-text-stroke:0.45px #1f2226;">Email</div>
<svg class=a style="left:40.50px;top:1159.60px;" width="39.60" height="39.60" viewBox="0 0 24 24" fill="none" stroke="#484848" stroke-width="2" stroke-linecap="round" stroke-linejoin="round"><path d="M12 12m-9 0a9 9 0 1 0 18 0a9 9 0 1 0 -18 0"/><path d="M14.401 8c-.669 -.628 -1.5 -1 -2.401 -1c-2.21 0 -4 2.239 -4 5s1.79 5 4 5c.9 0 1.731 -.372 2.4 -1"/><path d="M7 10.5h4"/><path d="M7 13.5h4"/></svg>
<div class=t style="left:95.60px;top:1164.74px;font-size:29.36px;line-height:29.36px;color:#1f2226;letter-spacing:0.406px;-webkit-text-stroke:0.45px #1f2226;">Pricing Plan</div>
<svg class=a style="left:40.40px;top:1216.20px;" width="39.60" height="39.60" viewBox="0 0 24 24" fill="none" stroke="#484848" stroke-width="2" stroke-linecap="round" stroke-linejoin="round"><path d="M16.5 10c3.038 0 5.5 2.015 5.5 4.5c0 1.397 -.778 2.645 -2 3.47l0 2.03l-1.964 -1.178a6.649 6.649 0 0 1 -1.536 .178c-3.038 0 -5.5 -2.015 -5.5 -4.5s2.462 -4.5 5.5 -4.5z"/><path d="M11.197 15.698c-.69 .196 -1.43 .302 -2.197 .302a8.008 8.008 0 0 1 -2.612 -.432l-2.388 1.432v-2.801c-1.237 -1.082 -2 -2.564 -2 -4.199c0 -3.314 3.134 -6 7 -6c3.782 0 6.863 2.57 7 5.785l0 .233"/><path d="M10 8h.01"/><path d="M7 8h.01"/><path d="M15 13h.01"/><path d="M18 13h.01"/></svg>
<div class=t style="left:96.60px;top:1219.94px;font-size:29.36px;line-height:29.36px;color:#1f2226;letter-spacing:0.888px;-webkit-text-stroke:0.45px #1f2226;">Support</div>
<div class=t style="left:45.10px;top:308.89px;font-size:23.98px;line-height:23.98px;color:#5f6b7a;letter-spacing:1.095px;-webkit-text-stroke:0.3px #5f6b7a;">VAT Management</div>
<div class=t style="left:44.10px;top:500.39px;font-size:23.98px;line-height:23.98px;color:#5f6b7a;letter-spacing:1.153px;-webkit-text-stroke:0.3px #5f6b7a;">Sales Documents</div>
<div class=t style="left:44.10px;top:805.09px;font-size:23.98px;line-height:23.98px;color:#5f6b7a;letter-spacing:1.568px;-webkit-text-stroke:0.3px #5f6b7a;">Settings</div>
<div class=a style="left:36.00px;top:876.00px;width:310.00px;height:84.00px;box-sizing:border-box;border:10px solid #5c13bf;border-radius:36px"></div>
<div class=a style="left:0.00px;top:0.00px;width:2900.00px;height:112.00px;background:#fff;box-shadow:0 1px 4px rgba(0,0,0,0.10)"></div>
<svg class=a style="left:28px;top:22px" width="70" height="70" viewBox="0 0 70 70">
<defs>
<linearGradient id="lgP" x1="0.75" y1="0" x2="0.15" y2="0.95"><stop offset="0" stop-color="#5d12c4"/><stop offset="0.55" stop-color="#7a2ec2"/><stop offset="1" stop-color="#a25abd"/></linearGradient>
<linearGradient id="lgG" x1="0" y1="1" x2="1" y2="0"><stop offset="0" stop-color="#3a6c5c"/><stop offset="0.5" stop-color="#5c9f83"/><stop offset="1" stop-color="#7ac7a3"/></linearGradient>
<linearGradient id="lgB" x1="0" y1="1" x2="1" y2="0"><stop offset="0" stop-color="#3a7fc4"/><stop offset="1" stop-color="#4ea6e0"/></linearGradient>
<clipPath id="cpL"><path d="M49.6 10.9 A29 29 0 1 0 61.8 32 C61.22 34.17 59.93 41.53 58.30 45.00 C56.67 48.47 54.55 50.80 52.00 52.80 C49.45 54.80 46.17 56.23 43.00 57.00 C39.83 57.77 35.83 57.80 33.00 57.40 C30.17 57.00 27.97 55.83 26.00 54.60 C24.03 53.37 22.40 51.93 21.20 50.00 C20.00 48.07 18.92 45.42 18.80 43.00 C18.68 40.58 19.55 37.58 20.50 35.50 C21.45 33.42 22.83 31.82 24.50 30.50 C26.17 29.18 28.17 28.25 30.50 27.60 C32.83 26.95 37.17 26.77 38.50 26.60 L47.6 13 Z"/></clipPath><clipPath id="cpR"><rect x="0" y="0" width="50" height="70"/></clipPath>
</defs>
<path d="M49.6 10.9 A29 29 0 1 0 61.8 32 C61.22 34.17 59.93 41.53 58.30 45.00 C56.67 48.47 54.55 50.80 52.00 52.80 C49.45 54.80 46.17 56.23 43.00 57.00 C39.83 57.77 35.83 57.80 33.00 57.40 C30.17 57.00 27.97 55.83 26.00 54.60 C24.03 53.37 22.40 51.93 21.20 50.00 C20.00 48.07 18.92 45.42 18.80 43.00 C18.68 40.58 19.55 37.58 20.50 35.50 C21.45 33.42 22.83 31.82 24.50 30.50 C26.17 29.18 28.17 28.25 30.50 27.60 C32.83 26.95 37.17 26.77 38.50 26.60 L47.6 13 Z" fill="#a45bbf"/>
<g clip-path="url(#cpL)"><circle cx="36.6" cy="37.2" r="24.7" fill="url(#lgP)" clip-path="url(#cpR)"/></g>
<path d="M23.0 51.2 C22.50 50.25 20.47 47.62 20.00 45.50 C19.53 43.38 19.62 40.67 20.20 38.50 C20.78 36.33 21.95 34.15 23.50 32.50 C25.05 30.85 26.95 29.35 29.50 28.60 C32.05 27.85 37.25 28.10 38.80 28.00 L49.2 15.0 L52.6 17.6 L42.6 33.6 C41.42 33.20 37.85 31.23 35.50 31.20 C33.15 31.17 30.38 32.18 28.50 33.40 C26.62 34.62 25.12 36.65 24.20 38.50 C23.28 40.35 23.20 42.38 23.00 44.50 C22.80 46.62 23.00 50.08 23.00 51.20 Z" fill="url(#lgG)"/>
<path d="M26.2 52.8 C25.73 51.58 23.60 47.80 23.40 45.50 C23.20 43.20 23.98 40.75 25.00 39.00 C26.02 37.25 27.75 35.93 29.50 35.00 C31.25 34.07 33.28 33.40 35.50 33.40 C37.72 33.40 41.58 34.73 42.80 35.00 L51.8 23.4 L53.3 26.5 L53.2 29.5 L44.6 47.0 C44.33 46.13 43.85 43.23 43.00 41.80 C42.15 40.37 40.83 39.15 39.50 38.40 C38.17 37.65 36.48 37.13 35.00 37.30 C33.52 37.47 31.78 38.28 30.60 39.40 C29.42 40.52 28.63 41.77 27.90 44.00 C27.17 46.23 26.48 51.33 26.20 52.80 Z" fill="url(#lgB)"/>
</svg>
<div class=t style="left:102.70px;top:35.26px;font-size:38.66px;line-height:38.66px;color:#0e0740;letter-spacing:-0.339px;-webkit-text-stroke:0.9px #0e0740;-webkit-text-stroke-color:#fff;">Comm</div>
<div class=t style="left:215.47px;top:36.00px;font-size:37.79px;line-height:37.79px;color:#0e0740;font-weight:700;transform:scaleX(0.6667);transform-origin:0 0;">B</div>
<div class=a style="left:235.80px;top:48.80px;width:4.90px;height:19.20px;background:#0e0740"></div>
<div class=a style="left:243.90px;top:41.80px;width:4.60px;height:26.20px;background:#0e0740"></div>
<div class=a style="left:251.90px;top:41.80px;width:4.70px;height:26.20px;background:#0e0740"></div>
<div class=a style="left:259.90px;top:48.80px;width:4.70px;height:19.20px;background:#0e0740"></div>
<div class=t style="left:266.65px;top:36.00px;font-size:37.79px;line-height:37.79px;color:#0e0740;font-weight:700;transform:scaleX(0.8737);transform-origin:0 0;">n</div>
<div class=t style="left:287.41px;top:36.00px;font-size:37.79px;line-height:37.79px;color:#0e0740;font-weight:700;transform:scaleX(0.9850);transform-origin:0 0;">g</div>
<div class=a style="left:235.30px;top:41.10px;width:5.80px;height:5.80px;background:#5b14c8;border-radius:50%"></div>
<div class=a style="left:259.30px;top:41.10px;width:5.80px;height:5.80px;background:#5b14c8;border-radius:50%"></div>
<svg class=a style="left:2740.44px;top:36.04px;" width="39.12" height="39.12" viewBox="0 0 24 24" fill="none" stroke="#474747" stroke-width="2" stroke-linecap="round" stroke-linejoin="round"><path d="M19.5 12.572l-7.5 7.428l-7.5 -7.428a5 5 0 1 1 7.5 -6.566a5 5 0 1 1 7.5 6.572"/></svg>
<div class=a style="left:2844.70px;top:41.00px;width:6.60px;height:6.60px;background:#1f2328;border-radius:50%"></div>
<div class=a style="left:2844.70px;top:52.60px;width:6.60px;height:6.60px;background:#1f2328;border-radius:50%"></div>
<div class=a style="left:2844.70px;top:64.20px;width:6.60px;height:6.60px;background:#1f2328;border-radius:50%"></div>
<div class=a style="left:0.00px;top:1479.00px;width:2900.00px;height:75.00px;background:linear-gradient(to bottom, rgba(0,0,0,0) 0%, rgba(0,0,0,0.012) 45%, rgba(0,0,0,0.035) 78%, rgba(0,0,0,0.072) 100%);pointer-events:none"></div>
<div class=a style="left:2900.00px;top:0.00px;width:8.00px;height:1554.00px;background:#dedede"></div>
<div class=a style="left:2900.00px;top:0.00px;width:8.00px;height:981.00px;background:#9e9e9e;border-radius:4px"></div>
<svg class=a style="left:2886px;top:1532px" width="22" height="22" viewBox="0 0 22 22"><path d="M22 0 L22 22 L0 22 A22 22 0 0 0 22 0z" fill="#c6c6c6"/><path d="M0 22 A22 22 0 0 0 22 0" fill="none" stroke="#8a8a8a" stroke-width="0.9"/></svg>
</body></html>
